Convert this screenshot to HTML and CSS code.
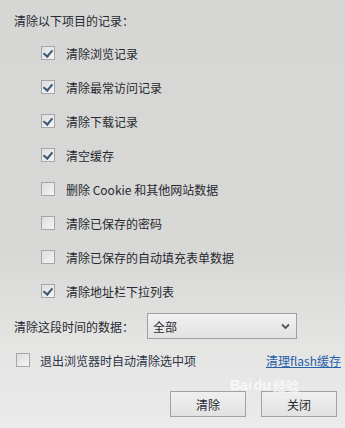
FILE: index.html
```html
<!DOCTYPE html>
<html lang="zh">
<head>
<meta charset="utf-8">
<link rel="stylesheet" href="styles.css">
</head>
<body>
<div class="dialog">
  <div class="top">
    <div class="title">清除以下项目的记录：</div>
    <ul class="items">
      <li class="row"><span class="cb on"></span><span>清除浏览记录</span></li>
      <li class="row"><span class="cb on"></span><span>清除最常访问记录</span></li>
      <li class="row"><span class="cb on"></span><span>清除下载记录</span></li>
      <li class="row"><span class="cb on"></span><span>清空缓存</span></li>
      <li class="row"><span class="cb"></span><span>删除 Cookie 和其他网站数据</span></li>
      <li class="row"><span class="cb"></span><span>清除已保存的密码</span></li>
      <li class="row"><span class="cb"></span><span>清除已保存的自动填充表单数据</span></li>
      <li class="row"><span class="cb on"></span><span>清除地址栏下拉列表</span></li>
    </ul>
  </div>
  <div class="bottom">
    <div class="range">
      <span class="range-label">清除这段时间的数据：</span>
      <div class="select"><span>全部</span><svg class="chev" width="9" height="7" viewBox="0 0 9 7"><path d="M1 1.5 L4.5 5 L8 1.5" fill="none" stroke="#555" stroke-width="1.8"/></svg></div>
    </div>
    <div class="exit-row">
      <span class="cb"></span><span class="exit-text">退出浏览器时自动清除选中项</span>
      <a class="flash">清理flash缓存</a>
    </div>
    <div class="buttons">
      <button class="btn">清除</button>
      <button class="btn">关闭</button>
    </div>
  </div>
  <div class="watermark"><span class="wm-bai">Bai</span><span class="wm-paw">du</span><span class="wm-jy">经验</span></div>
</div>
</body>
</html>
```
FILE: styles.css
```css
html, body {
  margin: 0;
  padding: 0;
}
body {
  width: 345px;
  height: 428px;
  overflow: hidden;
  font-family: "Noto Sans CJK SC", "Liberation Sans", sans-serif;
  font-size: 12px;
  color: #262a30;
}
.dialog {
  position: relative;
  width: 345px;
  height: 428px;
  background: linear-gradient(#d6d7d5 0%, #d8d8d7 60%, #e4e4e3 80%, #ebebeb 100%);
}
.top {
  padding: 11px 0 0 14px;
}
.title {
  height: 20px;
  line-height: 20px;
}
.items {
  list-style: none;
  margin: 5px 0 0 0;
  padding: 0 0 0 27px;
}
.row {
  height: 34px;
  display: flex;
  align-items: center;
  gap: 11px;
}
.cb {
  box-sizing: border-box;
  width: 14px;
  height: 14px;
  border: 1px solid #a4a6a8;
  background: linear-gradient(135deg, #dcdedf, #f4f4f4);
  position: relative;
  flex: none;
}
.cb.on::after {
  content: "";
  position: absolute;
  left: 3px;
  top: 1px;
  width: 4px;
  height: 7px;
  border: solid #3d5872;
  border-width: 0 2px 2px 0;
  transform: rotate(40deg);
}
.bottom {
  padding: 5px 0 0 14px;
}
.range {
  display: flex;
  align-items: center;
  height: 26px;
}
.range-label {
  width: 133px;
}
.select {
  box-sizing: border-box;
  width: 150px;
  height: 26px;
  border: 1px solid #9ea0a2;
  background: linear-gradient(#f2f2f2, #e2e2e2);
  display: flex;
  align-items: center;
  justify-content: space-between;
  padding: 0 6px 0 5px;
}
.exit-row {
  display: flex;
  align-items: center;
  height: 20px;
  margin-top: 11px;
  padding-left: 2px;
  padding-right: 4px;
}
.exit-row .cb {
  margin-right: 10px;
}
.exit-text {
  flex: 1;
  color: #2a3444;
}
.flash {
  color: #2660a8;
  text-decoration: underline;
}
.buttons {
  display: flex;
  justify-content: flex-end;
  gap: 15px;
  margin-top: 21px;
  padding-right: 8px;
}
.btn {
  box-sizing: border-box;
  width: 76px;
  height: 26px;
  border: 1px solid #a2a2a2;
  background: linear-gradient(#f0f0f0, #e2e2e2);
  font-family: inherit;
  font-size: 12px;
  color: #262a30;
  padding: 0;
}
.watermark {
  position: absolute;
  left: 230px;
  top: 378px;
  height: 15px;
  line-height: 15px;
  color: rgba(255, 255, 255, 0.7);
  font-family: "Liberation Sans", sans-serif;
  font-size: 14px;
  font-weight: bold;
  display: flex;
  gap: 2px;
  pointer-events: none;
}
.wm-jy {
  font-family: "Noto Sans CJK SC", sans-serif;
  font-size: 13px;
}
```
